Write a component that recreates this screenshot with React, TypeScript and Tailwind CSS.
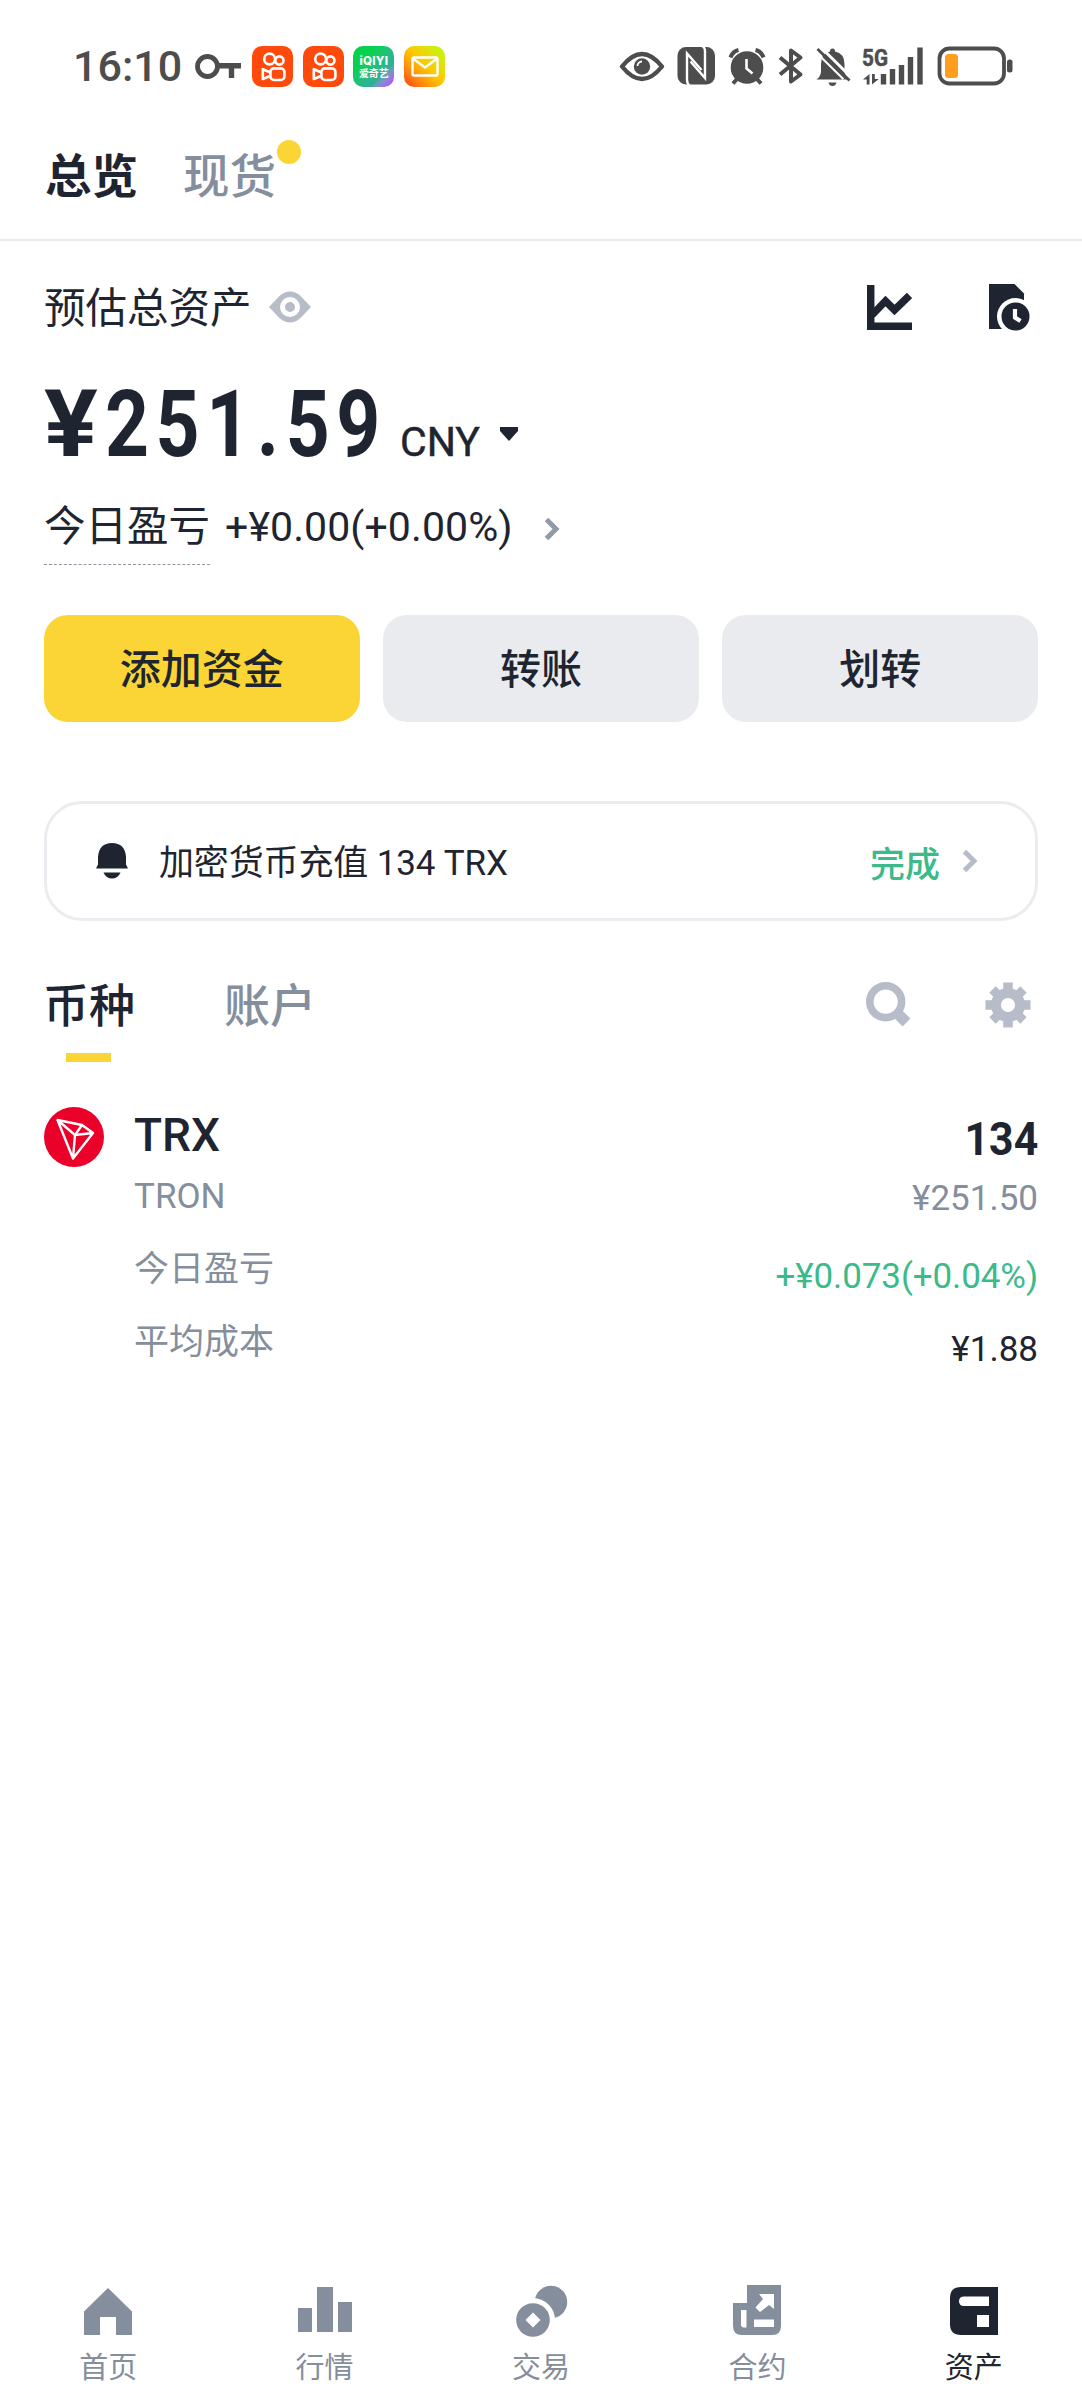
import type { ReactNode } from "react";
import clsx from "clsx";

const din = "font-['Roboto','Noto_Sans_CJK_SC',sans-serif]";

function KeyIcon() {
  return (
    <svg width="47" height="26" viewBox="0 0 47 26" fill="none" stroke="#4d4d4d">
      <circle cx="12.5" cy="12.5" r="10" strokeWidth="4.8" />
      <path d="M23 11.8H46M36.5 12v12" strokeWidth="5.4" />
    </svg>
  );
}

function KuaishouIcon() {
  return (
    <svg width="41" height="41" viewBox="0 0 41 41" fill="none" stroke="#fff" strokeWidth="2.6">
      <rect width="41" height="41" rx="10" fill="#ff4a0b" stroke="none" />
      <circle cx="17.6" cy="13" r="5.4" />
      <circle cx="27.4" cy="14.5" r="4.1" />
      <rect x="18.4" y="22.4" width="14" height="11.6" rx="3.6" />
      <path d="M18 26.2l-7.2-3v9.8l7.2-3" strokeLinejoin="round" />
    </svg>
  );
}

function IqiyiIcon() {
  return (
    <div className="flex h-[41px] w-[41px] flex-col items-center justify-center rounded-[10px] bg-linear-135 from-[#06d14f] from-30% via-[#2fae9a] via-70% to-[#b050ff] to-92% text-white">
      <span className="font-['Inter',sans-serif] text-[11.500px] leading-[11px] font-extrabold tracking-[0.3px]">iQIYI</span>
      <span className="font-['Noto_Sans_CJK_SC',sans-serif] text-[10px] leading-[11px] font-bold">爱奇艺</span>
    </div>
  );
}

function MailIcon() {
  return (
    <div className="flex h-[41px] w-[41px] items-center justify-center rounded-[10px] bg-linear-45 from-[#ff5a12] from-10% via-[#ffc400] via-50% to-[#c6f312] to-90%">
      <svg width="28" height="21" viewBox="0 0 28 21" fill="none" stroke="#fff" strokeWidth="2.4" strokeLinejoin="round">
        <rect x="1.5" y="1.5" width="25" height="18" rx="1.5" />
        <path d="M2.5 3L14 11.5 25.500 3" />
      </svg>
    </div>
  );
}

// Right half of the status bar: eye, nfc, alarm, bluetooth, mute, signal, battery
function StatusIcons() {
  return (
    <svg width="396" height="53" viewBox="618 40 396 53" fill="none" stroke="#4d4d4d">
      <path d="M622 66.500C630 56.500 636 54 642 54s12 2.500 20 12.500C654 76.500 648 79 642 79s-12-2.500-20-12.500z" strokeWidth="4.400" strokeLinejoin="round" />
      <circle cx="642" cy="66.500" r="8.200" fill="#4d4d4d" stroke="none" />
      <path d="M637.500 66a4.500 4.500 0 0 1 4.500-4.500" stroke="#fff" strokeWidth="1.800" />

      <rect x="677.500" y="47" width="37.500" height="37.500" rx="8.500" fill="#4d4d4d" stroke="none" />
      <path d="M690 86q-3-2-3-6V53.500l14.500 16.500" stroke="#fff" strokeWidth="2.400" />
      <path d="M702 45.500q3 2 3 6V78L690.500 61.500" stroke="#fff" strokeWidth="2.400" />

      <circle cx="747" cy="67.500" r="16.300" fill="#4d4d4d" stroke="none" />
      <path d="M746.500 59v9.500l6 5" stroke="#fff" strokeWidth="2.600" />
      <path d="M730.500 57.500q2-6 8-7.500M763.500 57.500q-2-6-8-7.500" strokeWidth="4" />
      <path d="M737 79l-4 4.500M757 79l4 4.500" strokeWidth="4" />

      <path d="M780 57.500l20.500 17L791 81.500v-31l9.500 7L780 74.500" strokeWidth="4" strokeLinejoin="round" />

      <path d="M816.500 79.500q4-3 4.500-7.500V64q0-10.500 9-12.500 0-3 2.500-3t2.500 3q9.500 2 9.500 12.500v8q.5 4.500 4 7.500z" fill="#4d4d4d" stroke="none" />
      <path d="M828.500 82.500h8q-1 3.500-4 3.500t-4-3.500z" fill="#4d4d4d" stroke="none" />
      <path d="M820 46.500l32.500 32" stroke="#fff" strokeWidth="3" />
      <path d="M817.500 49l32 31.500" strokeWidth="2.800" />
      <path d="M815.500 51.800l28 27.500" stroke="#fff" strokeWidth="2" />

      <text x="862" y="65.500" textLength="26" lengthAdjust="spacingAndGlyphs" fill="#4d4d4d" stroke="#4d4d4d" strokeWidth="0.500" fontSize="24.500" fontWeight="700" fontFamily="Roboto, sans-serif">5G</text>
      <path d="M863 79.500L869.500 74v10.500h-2.800v-5zM872 84.500V74h2.800v5h4z" fill="#4d4d4d" stroke="none" />
      <path d="M883.500 74v10.500M892.500 69v15.500M901.500 65v19.500M910.500 57v27.500M920 47.500v37" strokeWidth="5.400" />

      <rect x="939.500" y="48.500" width="64.500" height="35" rx="10" strokeWidth="3.800" />
      <rect x="945" y="54" width="13" height="24" rx="3.500" fill="#ff9d1c" stroke="none" />
      <rect x="1007" y="59.500" width="5.500" height="13" rx="2.500" fill="#4d4d4d" stroke="none" />
    </svg>
  );
}

function StatusBar() {
  return (
    <div className="flex h-[133px] items-center justify-between pr-[68px] pl-[73px]">
      <div className="flex items-center">
        <span className={clsx(din, "w-[122px] text-[43px] leading-none font-medium text-[#4d4d4d]")}>16:10</span>
        <KeyIcon />
        <div className="ml-[10px] flex gap-[9.700px]">
          <KuaishouIcon />
          <KuaishouIcon />
          <IqiyiIcon />
          <MailIcon />
        </div>
      </div>
      <StatusIcons />
    </div>
  );
}

function Chevron({ className }: { className: string }) {
  return (
    <svg width="16" height="24" viewBox="0 0 16 24" fill="none" stroke="currentColor" strokeWidth="5" className={className}>
      <path d="M2.500 2.500L12 12l-9.500 9.500" />
    </svg>
  );
}

function EyeIcon() {
  return (
    <svg width="44" height="32" viewBox="0 0 44 32" className="ml-[16px]">
      <path d="M1 16L11 5.500Q16 .5 22 .5t11 5L43 16 33 26.500q-5 5-11 5t-11-5z" fill="#b7bcc9" />
      <circle cx="22" cy="16" r="7.500" fill="none" stroke="#fff" strokeWidth="5" />
    </svg>
  );
}

function ChartIcon() {
  return (
    <svg width="45" height="45" viewBox="0 0 45 45" fill="none" stroke="#1f2530">
      <path d="M3.700 0v41.200H45" strokeWidth="7.500" />
      <path d="M5 30L18.500 16l9 9L42.500 10.500" strokeWidth="7.500" />
    </svg>
  );
}

function HistoryIcon() {
  return (
    <svg width="42" height="47" viewBox="0 0 42 47">
      <path d="M0 0h25.500L35 9.500V45H0z" fill="#1f2530" />
      <circle cx="26.500" cy="32.500" r="18.500" fill="#fff" />
      <circle cx="26.500" cy="32.500" r="14" fill="#1f2530" />
      <path d="M26 25v8.500l5.500 3.500" fill="none" stroke="#fff" strokeWidth="4.200" />
    </svg>
  );
}

function BellIcon() {
  return (
    <svg width="32" height="36" viewBox="0 0 32 36" fill="#1f2530">
      <path d="M0 25.500l2-4V14Q3 0 16 0t14 14v7.500l2 4z" />
      <path d="M7.500 29.500h17Q22 35.500 16 35.500t-8.500-6z" />
    </svg>
  );
}

function SearchIcon() {
  return (
    <svg width="45" height="45" viewBox="0 0 45 45" fill="none" stroke="#b7bcc9">
      <circle cx="19.700" cy="19.700" r="15.900" strokeWidth="7.600" />
      <path d="M30 30l10.500 10.500" strokeWidth="11" />
    </svg>
  );
}

function GearIcon() {
  return (
    <svg width="46" height="46" viewBox="-23 -23 46 46" stroke="#b7bcc9">
      <path d="M0-22.500v45M-22.500 0h45" strokeWidth="9.500" />
      <path d="M-15.500-15.500l31 31M15.500-15.500l-31 31" strokeWidth="9" />
      <circle r="17" fill="#b7bcc9" stroke="none" />
      <circle r="7" fill="#fff" stroke="none" />
    </svg>
  );
}

function TronIcon() {
  return (
    <svg width="60" height="60" viewBox="0 0 60 60" className="shrink-0">
      <circle cx="30" cy="30" r="30" fill="#eb0029" />
      <path d="M13.500 13l24.500 5 11 8-20 25.500zM13.500 13L31 28l7-10M31 28l18-2M31 28l-2 23.500" fill="none" stroke="#fff" strokeWidth="2.400" strokeLinejoin="round" />
    </svg>
  );
}

const navItems: { label: string; active?: boolean; icon: ReactNode }[] = [
  {
    label: "首页",
    icon: <path d="M27 4l24 23.500V51H35V33H19v18H3V27.500z" />,
  },
  {
    label: "行情",
    icon: <path d="M0 24h14v24H0zM19 3h16v45H19zM40 18h14v30H40z" />,
  },
  {
    label: "交易",
    icon: (
      <>
        <circle cx="37" cy="18" r="16.200" />
        <circle cx="19" cy="36" r="22" fill="#fff" />
        <circle cx="19" cy="36" r="16.800" />
        <path d="M19 28.500l7.500 7.500-7.500 7.500-7.500-7.500z" fill="#fff" />
      </>
    ),
  },
  {
    label: "合约",
    icon: (
      <>
        <path d="M17 1h34v41q0 9-9 9H12q-9 0-9-9V19h14z" />
        <path d="M11 26h5.500v17.500h-2.500q-3 0-3-3zM24 35.500h20V43H24zM29 10h15v15l-5-4-9 7-4.500-4.500 7.500-8.500z" fill="#fff" />
      </>
    ),
  },
  {
    label: "资产",
    active: true,
    icon: (
      <>
        <path d="M14 3h37v48H14Q3 51 3 40V14Q3 3 14 3z" />
        <path d="M17 12.500h25v9.500H17q-5 0-5-4.750t5-4.750zM30 31h12v12H30z" fill="#fff" />
      </>
    ),
  },
];

const actions = [
  { label: "添加资金", className: "bg-[#fbd535]" },
  { label: "转账", className: "bg-[#eaebef]" },
  { label: "划转", className: "bg-[#eaebef]" },
];

export default function App() {
  return (
    <div className="flex min-h-[2400px] w-[1082px] flex-col bg-white font-['Noto_Sans_CJK_SC',sans-serif] text-[#1f2530]">
      <StatusBar />

      <div className="flex h-[108px] gap-[45px] border-b-2 border-[#e9eaec] pt-[12px] pl-[45px] text-[46.500px] leading-[56px]">
        <span className="font-bold">总览</span>
        <span className="relative font-medium text-[#848e9c]">
          现货
          <i className="absolute -top-[5px] -right-[25px] h-[24px] w-[24px] rounded-full bg-[#fbd535]" />
        </span>
      </div>

      <main className="px-[44px]">
        <div className="flex h-[132px] items-center">
          <span className="pb-[2px] text-[41.500px] leading-none">预估总资产</span>
          <EyeIcon />
          <div className="ml-auto flex items-center gap-[77px] pr-[7px]">
            <ChartIcon />
            <HistoryIcon />
          </div>
        </div>

        <div className={clsx(din, "mt-[5px] flex h-[93px] items-baseline")}>
          <span className="w-[61px] origin-left scale-x-[1.08] text-[93px] leading-[93px] font-bold">¥</span>
          <span className="w-[295px] origin-left scale-x-[0.825] text-[93px] leading-[93px] font-bold tracking-[8px] whitespace-nowrap">251.59</span>
          <span className="text-[41px] leading-none [-webkit-text-stroke:0.5px]">CNY</span>
          <svg width="18" height="15" viewBox="0 0 18 15" className="mt-[49px] mr-[520px] ml-auto self-start">
            <path d="M0 0h18v4L9 14 0 4z" fill="#1f2530" />
          </svg>
        </div>

        <div className="mt-[14px] flex h-[80px] items-center">
          <span className="h-full border-b border-dashed border-[#8f959f] text-[41.500px] leading-[76px]">今日盈亏</span>
          <span className={clsx(din, "mt-[4px] ml-[15px] text-[41px] leading-none tracking-[0.100px]")}>+¥0.00(+0.00%)</span>
          <Chevron className="mt-[7px] ml-[31px] text-[#929aa5]" />
        </div>

        <div className="mt-[50px] grid grid-cols-3 gap-[23.500px]">
          {actions.map((action) => (
            <button key={action.label} className={clsx("h-[107px] rounded-[24px] pb-[5px] text-[41px] leading-none font-medium", action.className)}>
              {action.label}
            </button>
          ))}
        </div>

        <div className="mt-[79px] flex h-[120px] items-center rounded-[38px] border-[3px] border-[#eaecef] pr-[57px] pl-[49px]">
          <BellIcon />
          <span className={clsx(din, "mt-[5px] ml-[31px] text-[35px] leading-none tracking-[-0.150px]")}>加密货币充值 134 TRX</span>
          <span className="ml-auto text-[35px] leading-none font-medium text-[#3dba8a]">完成</span>
          <Chevron className="ml-[22px] text-[#b7bcc9]" />
        </div>

        <div className="mt-[27px] flex h-[114px] items-center text-[46px] leading-none">
          <span className="relative -ml-[1px] flex h-full items-center pb-[7px] font-medium">
            币种
            <i className="absolute bottom-0 left-[23px] h-[9px] w-[45px] bg-[#fbd535]" />
          </span>
          <span className="ml-[89px] pb-[7px] font-medium text-[#848e9c]">账户</span>
          <div className="mb-[1px] ml-auto flex items-center gap-[74px] pr-[7px]">
            <SearchIcon />
            <GearIcon />
          </div>
        </div>

        <div className="mt-[45px] flex">
          <TronIcon />
          <div className="ml-[30px] flex flex-1 flex-col text-[35px] text-[#848e9c]">
            <span className={clsx(din, "text-[46px] leading-[56px] font-medium text-[#1f2530]")}>TRX</span>
            <span className={clsx(din, "mt-[14px] leading-[40px]")}>TRON</span>
            <span className="mt-[29px] leading-[40px]">今日盈亏</span>
            <span className="mt-[33px] leading-[40px]">平均成本</span>
          </div>
          <div className={clsx(din, "flex flex-col items-end text-[35px]")}>
            <span className="mt-[4px] origin-right scale-x-[0.93] text-[46px] leading-[56px] font-bold">134</span>
            <span className="mt-[12px] leading-[40px] text-[#848e9c]">¥251.50</span>
            <span className="mt-[38px] leading-[40px] tracking-[-0.100px] text-[#3dba8a]">+¥0.073(+0.04%)</span>
            <span className="mt-[33px] leading-[40px]">¥1.88</span>
          </div>
        </div>
      </main>

      <nav className="mt-auto grid grid-cols-5 pb-[18px]">
        {navItems.map((item) => (
          <div key={item.label} className={clsx("flex flex-col items-center", item.active ? "text-[#1f2530]" : "text-[#848e9c]")}>
            <svg width="54" height="54" viewBox="0 0 54 54" fill="currentColor">
              {item.icon}
            </svg>
            <span className="mt-[10px] text-[29px] leading-[34px]">{item.label}</span>
          </div>
        ))}
      </nav>
    </div>
  );
}
